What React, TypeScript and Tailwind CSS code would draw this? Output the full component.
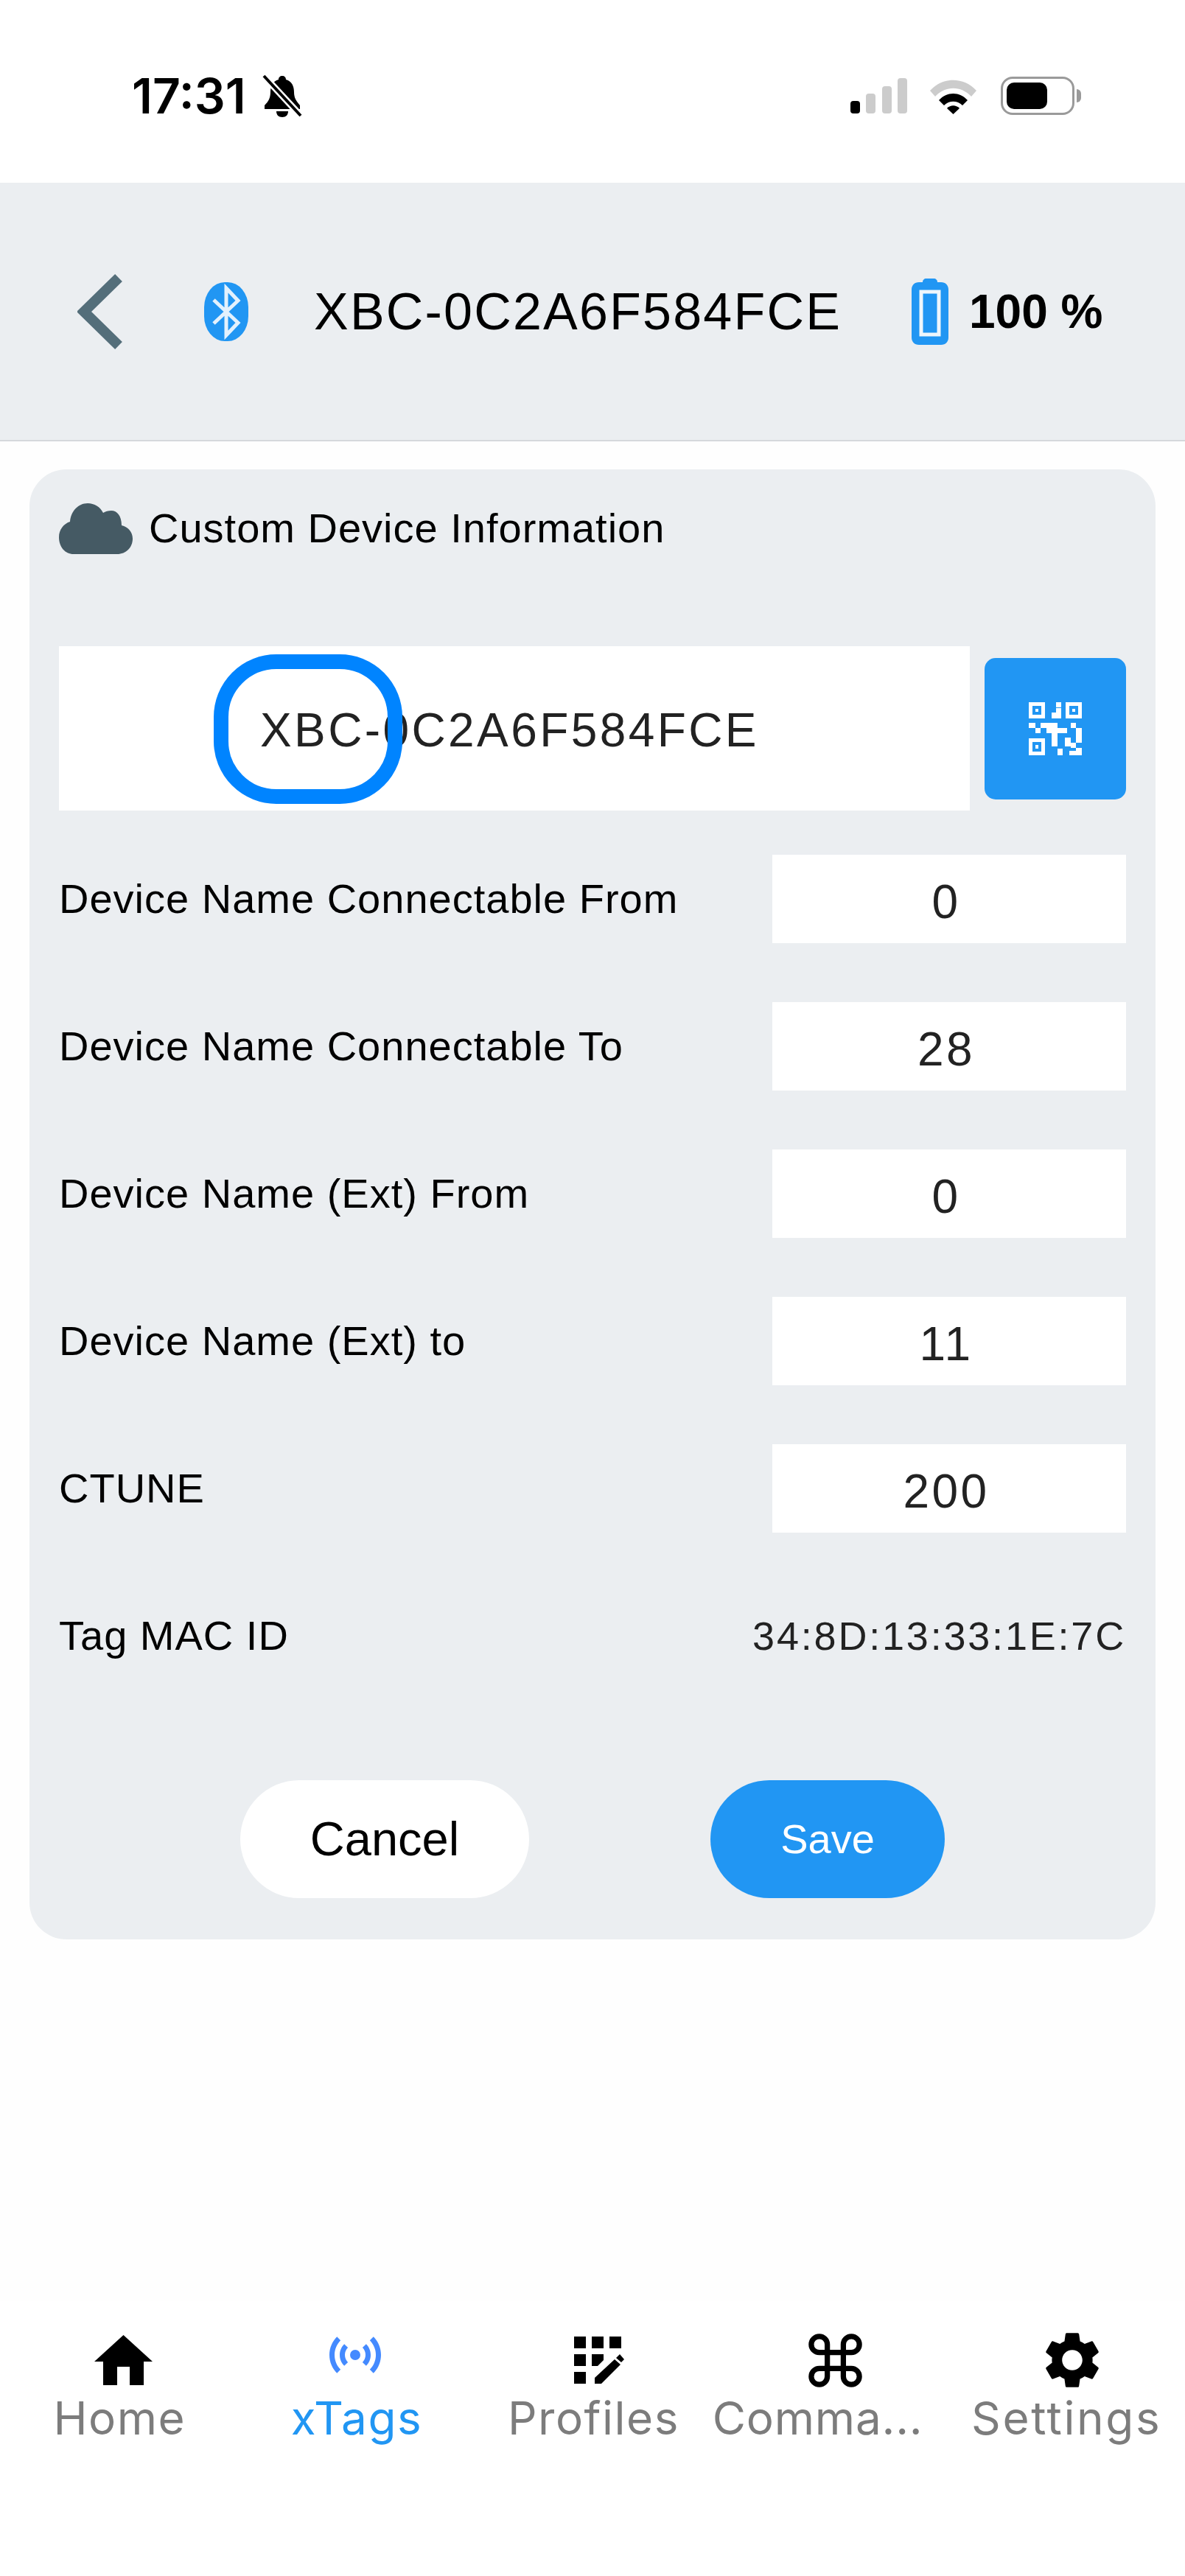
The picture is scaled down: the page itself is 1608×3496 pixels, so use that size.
import React from "react";
import { MdSettings } from "react-icons/md";

const Sans = "font-['Liberation_Sans',Arial,sans-serif]";

function Status() {
  return (
    <div className="h-[248px] bg-white flex items-center justify-between pl-[179px] pr-[141px] pt-[12px] shrink-0">
      <div className="flex items-center gap-[22px]">
        <span className="font-['Inter',sans-serif] font-semibold text-[66px] leading-none text-black">17:31</span>
        <svg width="54" height="58" viewBox="0 0 54 58">
          <path d="M27 2c3 0 5 2 5 5 8 2 11 9 11 17 0 8 3 12 8 18v5H3v-5c5-5 8-10 8-18 0-8 3-15 11-17 0-3 2-5 5-5z" fill="#000" />
          <path d="M19 50h16c0 5-3 8-8 8s-8-3-8-8z" fill="#000" />
          <path d="M2 2l50 54" stroke="#fff" strokeWidth="9" />
          <path d="M2 2l50 54" stroke="#000" strokeWidth="4" />
        </svg>
      </div>
      <div className="flex items-center">
        <svg width="77" height="48" viewBox="0 0 77 48" className="mr-[29px]">
          <rect x="0" y="31" width="13" height="17" rx="4" fill="#000" />
          <rect x="21" y="21" width="13" height="27" rx="4" fill="#cccccc" />
          <rect x="43" y="11" width="13" height="37" rx="4" fill="#cccccc" />
          <rect x="64" y="0" width="13" height="48" rx="4" fill="#cccccc" />
        </svg>
        <svg width="67" height="50" viewBox="0 0 67 50" className="mr-[31px]">
          <path d="M2 18C19 -1 48 -1 65 18l-7 8C44 11 23 11 9 26z" fill="#cccccc" />
          <path d="M14 31c11-12 28-12 39 0l-7 7c-7-7-18-7-25 0z" fill="#000" />
          <path d="M25 42c5-5 12-5 17 0l-8.500 8z" fill="#000" />
        </svg>
        <div className="relative w-[100px] h-[52px] rounded-[16px] border-[3px] border-[#9a9a9a] p-[5px] mr-[9px]">
          <div className="w-[55px] h-full rounded-[10px] bg-black" />
          <div className="absolute right-[-12px] top-[14px] w-[6px] h-[18px] rounded-r-full bg-[#9a9a9a]" />
        </div>
      </div>
    </div>
  );
}

function Header() {
  return (
    <div className={`h-[351px] shrink-0 bg-[#ebeef1] border-b-2 border-[#d5d8dc] flex items-center pl-[105px] ${Sans}`}>
      <svg width="62" height="102" viewBox="0 0 62 102" className="shrink-0">
        <path d="M56 5L9 51l47 46" fill="none" stroke="#546e7a" strokeWidth="14" strokeLinejoin="miter" />
      </svg>
      <svg width="60" height="80" viewBox="0 0 60 80" className="ml-[110px] shrink-0">
        <rect x="0" y="0" width="60" height="80" rx="28" ry="34" fill="#2196f3" />
        <path d="M13 24L46 55 30 72V8L46 25 13 56" fill="none" stroke="#e3f1fd" strokeWidth="5" />
      </svg>
      <span className="ml-[89px] text-[70px] leading-none tracking-[2.2px] text-black w-[711px] shrink-0 whitespace-nowrap">XBC-0C2A6F584FCE</span>
      <svg width="50" height="90" viewBox="0 0 50 90" className="ml-[100px] shrink-0">
        <path d="M15 5c0-3 2-5 5-5h10c3 0 5 2 5 5h5c6 0 10 4 10 10v65c0 6-4 10-10 10H10C4 90 0 86 0 80V15C0 9 4 5 10 5z" fill="#2196f3" />
        <rect x="13" y="18" width="24" height="58" fill="#2196f3" stroke="#eef6fc" strokeWidth="5" />
      </svg>
      <span className="ml-[28px] text-[64px] leading-none font-bold text-black whitespace-nowrap">100 %</span>
    </div>
  );
}

function Row({ label, value }: { label: string; value: string }) {
  return (
    <div className="h-[120px] flex items-center justify-between mb-[80px]">
      <span className="text-[56px] leading-none text-black tracking-[1px] -mt-[1px]">{label}</span>
      <div className="w-[480px] h-[120px] bg-white flex items-center justify-center pr-[8px] pt-[8px] text-[64px] tracking-[3.4px] text-[#222222]">{value}</div>
    </div>
  );
}

function QrIcon() {
  return (
    <svg width="72" height="72" viewBox="0 0 72 72" fill="#fff" fillRule="evenodd">
      <path d="M0 0h22v22H0zM5 5v12h12V5zM9 9h4v4H9z" />
      <path d="M50 0h22v22H50zM55 5v12h12V5zM59 9h4v4h-4z" />
      <path d="M0 49h22v23H0zM5 54v13h12V54zM9 58h4v5H9z" />
      <path d="M37 0h7v7h-7zM37 8h7v14H31V14h6z" />
      <path d="M0 28h9v7H0zM9 35h7v7H9zM16 28h23v7H16zM24 35h7v7h-7zM31 35h8v25h-8zM39 35h13v7H39zM57 28h7v7h-7zM64 35h8v20h-8zM39 63h7v9h-7zM49 48h8v12h-8zM57 55h7v7h-7zM64 62h8v10h-8zM55 66h9v6h-9z" />
    </svg>
  );
}

function Card() {
  return (
    <div className={`mx-[40px] mt-[38px] h-[1995px] rounded-[50px] bg-[#ebeef1] px-[40px] pt-[45px] ${Sans}`}>
      <div className="h-[71px] flex items-center">
        <svg width="100" height="69" viewBox="0 0 100 69" className="shrink-0">
          <path d="M20 69C8 69 0 59 0 46 0 36 6 28 15 25 16 11 26 0 39 0 48 0 56 5 60 13 63 11 67 10 71 10 79 10 85 17 85 30 94 32 100 39 100 48 100 60 91 69 79 69Z" fill="#455a64" />
        </svg>
        <span className="ml-[22px] text-[56px] leading-none text-black tracking-[1px] -mt-[1px] whitespace-nowrap">Custom Device Information</span>
      </div>
      <div className="mt-[124px] flex items-center h-[223px]">
        <div className="relative w-[1236px] h-[223px] bg-white flex items-center pl-[273px] pt-[4px] text-[64px] tracking-[3.4px] text-[#222222]">
          XBC-0C2A6F584FCE
          <div className="absolute left-[210px] top-[11px] w-[256px] h-[203px] rounded-[85px] border-[20px] border-[#0084ff]" />
        </div>
        <div className="ml-[20px] w-[192px] h-[192px] rounded-[15px] bg-[#2196f3] flex items-center justify-center">
          <QrIcon />
        </div>
      </div>
      <div className="mt-[60px]">
        <Row label="Device Name Connectable From" value="0" />
        <Row label="Device Name Connectable To" value="28" />
        <Row label="Device Name (Ext) From" value="0" />
        <Row label="Device Name (Ext) to" value="11" />
        <Row label="CTUNE" value="200" />
      </div>
      <div className="h-[120px] flex items-center justify-between">
        <span className="text-[56px] leading-none text-black tracking-[1px]">Tag MAC ID</span>
        <span className="text-[54px] leading-none text-[#222222] tracking-[2.8px]">34:8D:13:33:1E:7C</span>
      </div>
      <div className="mt-[136px] flex">
        <div className="ml-[246px] w-[392px] h-[160px] rounded-full bg-white flex items-center justify-center text-[65px] text-black">Cancel</div>
        <div className="ml-[246px] w-[318px] h-[160px] rounded-full bg-[#2196f3] flex items-center justify-center text-[56px] text-white">Save</div>
      </div>
    </div>
  );
}

function Tab({ label, active, icon, iconShift, labelClass }: { label: string; active?: boolean; icon: React.ReactNode; iconShift: string; labelClass: string }) {
  return (
    <div className="flex-1 flex flex-col items-center">
      <div className={`h-[92px] flex items-center justify-center ${iconShift}`}>{icon}</div>
      <span className={`-mt-[3px] text-[62px] leading-[72px] whitespace-nowrap ${active ? "text-[#2196f3]" : "text-[#7c7c7c]"} ${labelClass}`}>{label}</span>
    </div>
  );
}

function Nav() {
  return (
    <div className="h-[373px] shrink-0 bg-white flex pt-[34px] font-['Inter',sans-serif]">
      <Tab
        label="Home"
        iconShift="ml-[14px]"
        labelClass="tracking-[1.5px] ml-[3px]"
        icon={
          <svg width="79" height="68" viewBox="0 0 79 68">
            <path d="M39.500 0L79 36H67V68H48V43H31V68H12V36H0z" fill="#000" />
          </svg>
        }
      />
      <Tab
        label="xTags"
        active
        iconShift="-translate-y-[7px]"
        labelClass="tracking-[1.5px] ml-[3px]"
        icon={
          <svg width="84" height="84" viewBox="0 0 24 24" fill="#448aff">
            <path d="M4.93,4.93C3.12,6.74 2,9.24 2,12C2,14.76 3.12,17.26 4.93,19.07L6.34,17.66C4.89,16.22 4,14.22 4,12C4,9.79 4.89,7.78 6.34,6.34L4.93,4.93M19.07,4.93L17.66,6.34C19.11,7.78 20,9.79 20,12C20,14.22 19.11,16.22 17.66,17.66L19.07,19.07C20.88,17.26 22,14.76 22,12C22,9.24 20.88,6.74 19.07,4.93M7.76,7.76C6.67,8.85 6,10.35 6,12C6,13.65 6.67,15.15 7.76,16.24L9.17,14.83C8.45,14.11 8,13.11 8,12C8,10.89 8.45,9.89 9.17,9.17L7.76,7.76M16.24,7.76L14.83,9.17C15.55,9.89 16,10.89 16,12C16,13.11 15.55,14.11 14.83,14.83L16.24,16.24C17.33,15.15 18,13.65 18,12C18,10.35 17.33,8.85 16.24,7.76M12,10A2,2 0 0,0 10,12A2,2 0 0,0 12,14A2,2 0 0,0 14,12A2,2 0 0,0 12,10Z" />
          </svg>
        }
      />
      <Tab
        label="Profiles"
        iconShift="ml-[22px]"
        labelClass="tracking-[1.5px] ml-[3px]"
        icon={
          <svg width="72" height="64" viewBox="0 0 72 64">
            <rect x="0" y="0" width="16" height="16" />
            <rect x="24" y="0" width="16" height="16" />
            <rect x="48" y="0" width="16" height="16" />
            <rect x="0" y="24" width="16" height="16" />
            <path d="M24 24H40V32L32 40H24z" />
            <rect x="0" y="48" width="16" height="16" />
            <path d="M28 56L55 31 63 38 37 64H28zM57 29L62 24 68 31 64 35z" />
          </svg>
        }
      />
      <Tab
        label="Comma..."
        iconShift="ml-[16px]"
        labelClass="tracking-[0.8px] mr-[32px]"
        icon={
          <svg width="87" height="87" viewBox="0 0 24 24" fill="#000">
            <path d="M6,2A4,4 0 0,1 10,6V8H14V6A4,4 0 0,1 18,2A4,4 0 0,1 22,6A4,4 0 0,1 18,10H16V14H18A4,4 0 0,1 22,18A4,4 0 0,1 18,22A4,4 0 0,1 14,18V16H10V18A4,4 0 0,1 6,22A4,4 0 0,1 2,18A4,4 0 0,1 6,14H8V10H6A4,4 0 0,1 2,6A4,4 0 0,1 6,2M16,18A2,2 0 0,0 18,20A2,2 0 0,0 20,18A2,2 0 0,0 18,16H16V18M14,10H10V14H14V10M6,16A2,2 0 0,0 4,18A2,2 0 0,0 6,20A2,2 0 0,0 8,18V16H6M8,6A2,2 0 0,0 6,4A2,2 0 0,0 4,6A2,2 0 0,0 6,8H8V6M18,8A2,2 0 0,0 20,6A2,2 0 0,0 18,4A2,2 0 0,0 16,6V8H18Z" />
          </svg>
        }
      />
      <Tab label="Settings" iconShift="ml-[16px]" labelClass="tracking-[2.6px]" icon={<MdSettings size={92} color="#000" />} />
    </div>
  );
}

export default function App() {
  return (
    <div className="w-[1608px] h-[3496px] bg-white flex flex-col overflow-hidden">
      <Status />
      <Header />
      <div className="flex-1 bg-[#fefefe]">
        <Card />
      </div>
      <Nav />
    </div>
  );
}
